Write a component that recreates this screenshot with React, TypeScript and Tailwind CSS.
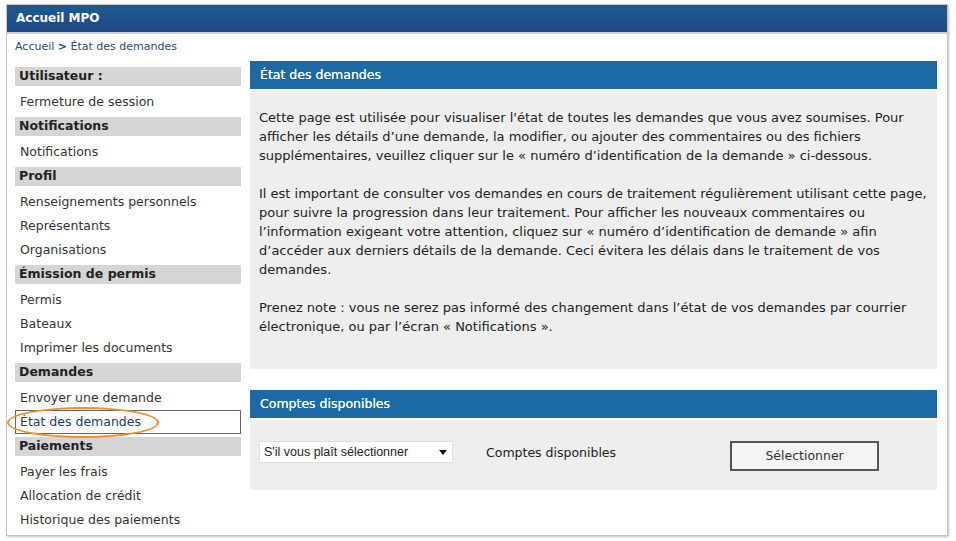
import React from 'react';

type Section = { title: string; items: string[] };

const sections: Section[] = [
  { title: 'Utilisateur :', items: ['Fermeture de session'] },
  { title: 'Notifications', items: ['Notifications'] },
  { title: 'Profil', items: ['Renseignements personnels', 'Représentants', 'Organisations'] },
  { title: 'Émission de permis', items: ['Permis', 'Bateaux', 'Imprimer les documents'] },
  { title: 'Demandes', items: ['Envoyer une demande', 'État des demandes'] },
  { title: 'Paiements', items: ['Payer les frais', 'Allocation de crédit', 'Historique des paiements'] },
];

const active = 'État des demandes';

function Sidebar() {
  return (
    <div className="w-[226px] mt-[6px] flex flex-col">
      {sections.map((s) => (
        <div key={s.title}>
          <div className="h-[19px] bg-[#d5d5d5] pl-[4px] flex items-center text-[12.5px] font-bold text-[#222]">
            {s.title}
          </div>
          <div className="pt-[4px] pb-[3px]">
            {s.items.map((item) =>
              item === active ? (
                <div
                  key={item}
                  className="relative h-[24px] border border-[#666] bg-white pl-[4px] flex items-center text-[12.5px] text-[#1d3d66]"
                >
                  {item}
                  <div className="absolute left-[-9px] top-[-4px] w-[152px] h-[31px] rounded-[50%] border-2 border-[#f0902c]" />
                </div>
              ) : (
                <div key={item} className="h-[24px] pl-[5px] flex items-center text-[12.5px] text-[#333]">
                  {item}
                </div>
              )
            )}
          </div>
        </div>
      ))}
    </div>
  );
}

function PanelHeader({ children }: { children: React.ReactNode }) {
  return (
    <div className="h-[30px] bg-[#1b69a5] border-b-2 border-white pl-[10px] flex items-center text-[12.5px] text-white [text-shadow:0_0_0.4px_#fff]">
      {children}
    </div>
  );
}

export default function App() {
  return (
    <div className="w-[956px] h-[541px] bg-white pt-[4px] pl-[6px] font-['DejaVu_Sans',sans-serif]">
      <div className="w-[942px] h-[532px] border border-[#c6c6c6] shadow-[1px_1px_2px_rgba(0,0,0,0.25)] flex flex-col">
        <div className="h-[30px] bg-gradient-to-b from-[#1a5c92] to-[#204885] border-b-2 border-[#cfcfcf] pl-[9px] flex items-center text-[12px] font-bold text-white">
          Accueil MPO
        </div>
        <div className="pl-[8px] pt-[5px] h-[28px] text-[11px] text-[#2c4a6e]">
          Accueil <span className="font-bold">&gt;</span> État des demandes
        </div>
        <div className="flex items-start pl-[8px] gap-[9px]">
          <Sidebar />
          <div className="w-[687px] flex flex-col gap-[21px]">
            <div>
              <PanelHeader>État des demandes</PanelHeader>
              <div className="h-[278px] bg-[#eeeeee] pl-[9px] pr-[2px] pt-[17px] text-[13px] leading-[19px] text-[#222]">
                <p>
                  Cette page est utilisée pour visualiser l'état de toutes les demandes que vous avez soumises. Pour
                  afficher les détails d’une demande, la modifier, ou ajouter des commentaires ou des fichiers
                  supplémentaires, veuillez cliquer sur le « numéro d’identification de la demande » ci-dessous.
                </p>
                <p className="mt-[19px]">
                  Il est important de consulter vos demandes en cours de traitement régulièrement utilisant cette page,
                  pour suivre la progression dans leur traitement. Pour afficher les nouveaux commentaires ou
                  l’information exigeant votre attention, cliquez sur « numéro d’identification de demande » afin
                  d’accéder aux derniers détails de la demande. Ceci évitera les délais dans le traitement de vos
                  demandes.
                </p>
                <p className="mt-[19px]">
                  Prenez note : vous ne serez pas informé des changement dans l’état de vos demandes par courrier
                  électronique, ou par l’écran « Notifications ».
                </p>
              </div>
            </div>
            <div>
              <PanelHeader>Comptes disponibles</PanelHeader>
              <div className="h-[70px] bg-[#eeeeee] pl-[9px] pt-[21px] flex items-start">
                <div className="w-[194px] h-[22px] bg-white border border-[#e0e0e0] flex items-center justify-between pl-[4px] pr-[5px] font-['Liberation_Sans',sans-serif] text-[12.5px] text-[#222]">
                  <span>S'il vous plaît sélectionner</span>
                  <svg width="8" height="5" viewBox="0 0 8 5">
                    <path d="M0 0h8L4 5z" fill="#111" />
                  </svg>
                </div>
                <div className="ml-[33px] mt-[3px] text-[12.5px] text-[#222]">Comptes disponibles</div>
                <button className="ml-[114px] w-[149px] h-[30px] border-2 border-[#555] bg-[#f5f5f5] text-[12.5px] text-[#333]">
                  Sélectionner
                </button>
              </div>
            </div>
          </div>
        </div>
      </div>
    </div>
  );
}
